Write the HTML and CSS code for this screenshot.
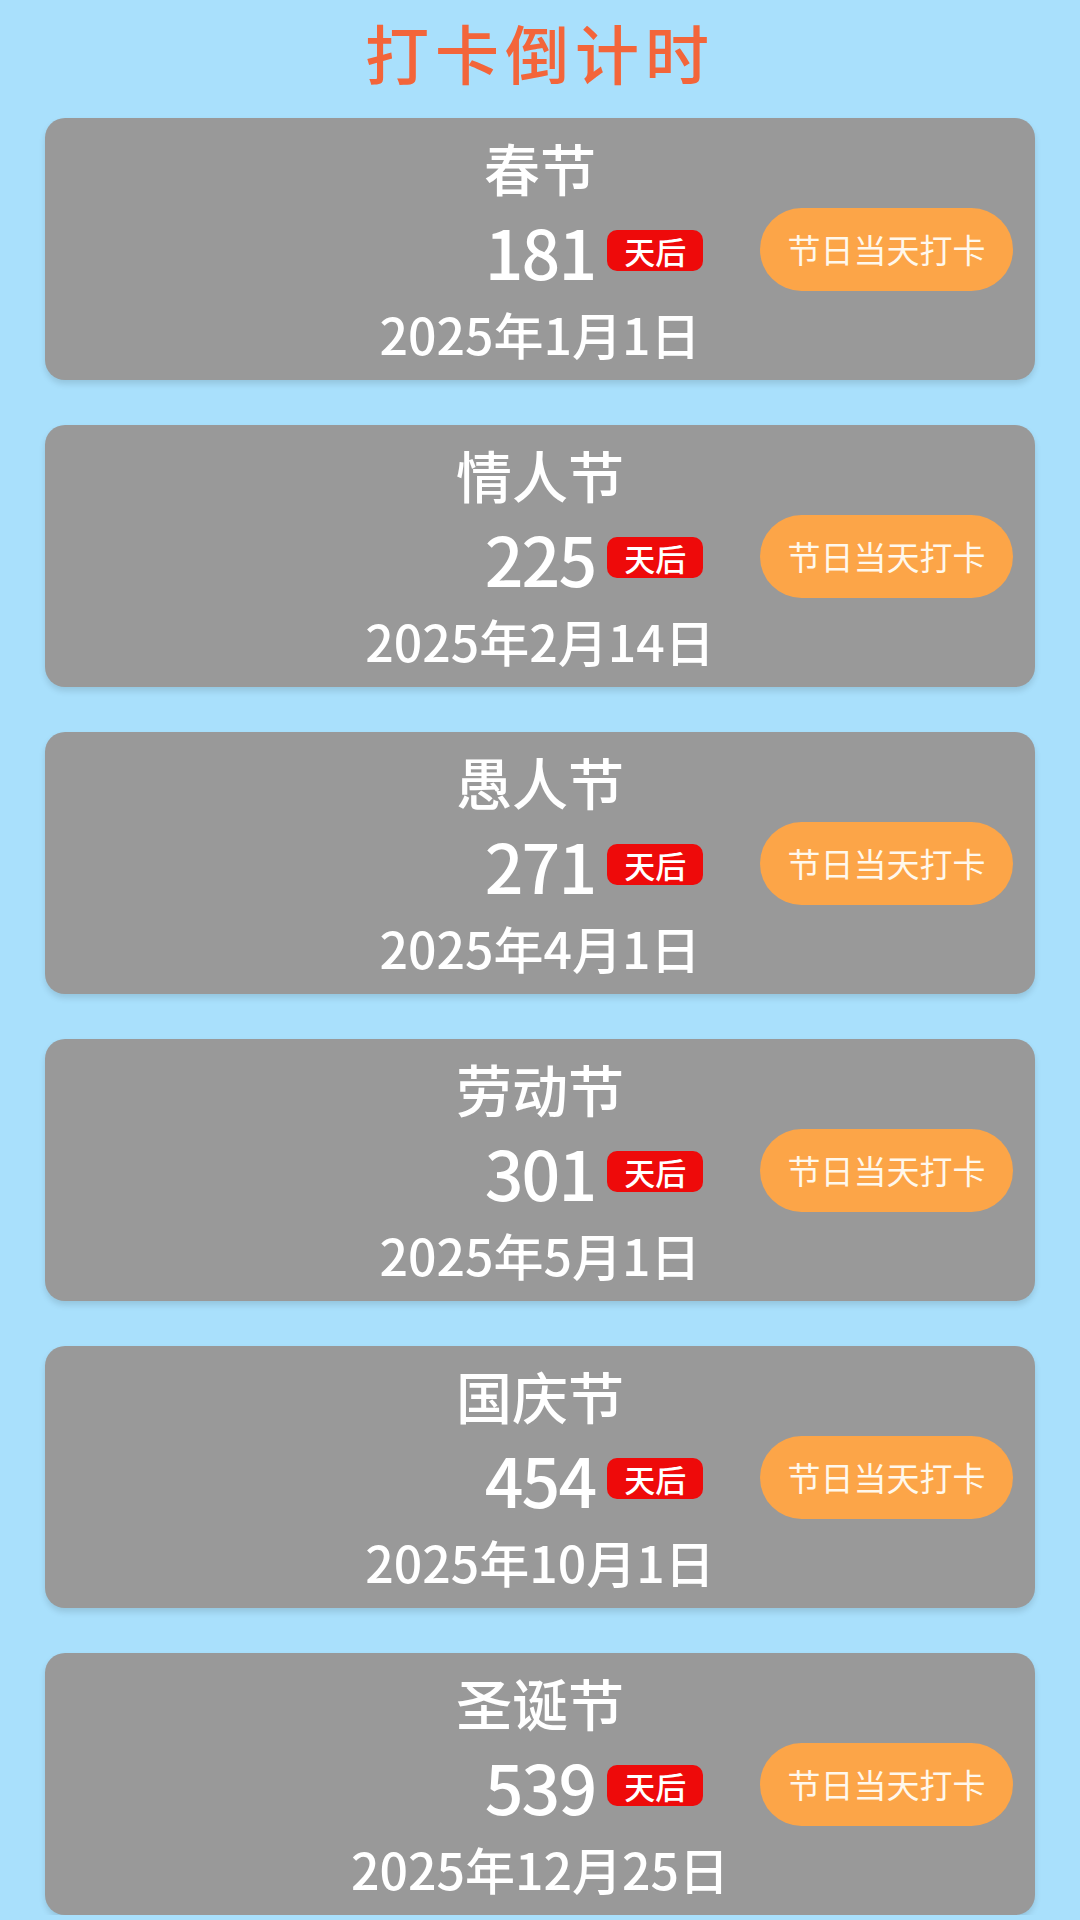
FILE: index.html
```html
<!DOCTYPE html>
<html lang="zh-CN">
<head>
    <meta charset="UTF-8">
    <meta name="viewport" content="width=device-width, initial-scale=1.0">
    <title>打卡倒计时</title>
    <link rel="stylesheet" href="styles.css">
</head>
<body>

<h1 class="page-title">打卡倒计时</h1>

<div class="list">
    <div class="card">
        <div class="info">
            <div class="name">春节</div>
            <div class="count-row">
                <span class="count">181</span>
                <span class="badge">天后</span>
            </div>
            <div class="date">2025年1月1日</div>
        </div>
        <button class="punch" type="button">节日当天打卡</button>
    </div>

    <div class="card">
        <div class="info">
            <div class="name">情人节</div>
            <div class="count-row">
                <span class="count">225</span>
                <span class="badge">天后</span>
            </div>
            <div class="date">2025年2月14日</div>
        </div>
        <button class="punch" type="button">节日当天打卡</button>
    </div>

    <div class="card">
        <div class="info">
            <div class="name">愚人节</div>
            <div class="count-row">
                <span class="count">271</span>
                <span class="badge">天后</span>
            </div>
            <div class="date">2025年4月1日</div>
        </div>
        <button class="punch" type="button">节日当天打卡</button>
    </div>

    <div class="card">
        <div class="info">
            <div class="name">劳动节</div>
            <div class="count-row">
                <span class="count">301</span>
                <span class="badge">天后</span>
            </div>
            <div class="date">2025年5月1日</div>
        </div>
        <button class="punch" type="button">节日当天打卡</button>
    </div>

    <div class="card">
        <div class="info">
            <div class="name">国庆节</div>
            <div class="count-row">
                <span class="count">454</span>
                <span class="badge">天后</span>
            </div>
            <div class="date">2025年10月1日</div>
        </div>
        <button class="punch" type="button">节日当天打卡</button>
    </div>

    <div class="card">
        <div class="info">
            <div class="name">圣诞节</div>
            <div class="count-row">
                <span class="count">539</span>
                <span class="badge">天后</span>
            </div>
            <div class="date">2025年12月25日</div>
        </div>
        <button class="punch" type="button">节日当天打卡</button>
    </div>
</div>

</body>
</html>
```

FILE: styles.css
```css
body {
    margin: 0;
    background: #a9e0fc;
    font-family: "Noto Sans CJK SC", "Noto Sans", sans-serif;
    color: #fff;
    overflow: hidden;
}

.page-title {
    margin: 0 0 27px;
    padding-top: 11px;
    text-align: center;
    font-size: 64px;
    line-height: 80px;
    font-weight: 500;
    letter-spacing: 6px;
    color: #f3653a;
}

.list {
    display: flex;
    flex-direction: column;
    gap: 45px;
    padding: 0 45px;
}

.card {
    display: grid;
    grid-template-columns: 1fr 420px 1fr;
    height: 262px;
    background: #999999;
    border-radius: 20px;
    box-shadow: 0 4px 6px rgba(0, 0, 0, 0.12);
}

.info {
    grid-column: 2;
    align-self: start;
    display: flex;
    flex-direction: column;
    align-items: center;
    padding-top: 13px;
}

.name {
    font-size: 56px;
    line-height: 72px;
    font-weight: 500;
}

.count-row {
    display: grid;
    grid-template-columns: minmax(0, 1fr) auto minmax(0, 1fr);
    width: 100%;
}

.count {
    grid-column: 2;
    font-size: 68px;
    line-height: 96px;
    font-weight: 500;
    letter-spacing: -2px;
}

.badge {
    grid-column: 3;
    justify-self: start;
    align-self: start;
    margin: 27px 0 0 12px;
    padding: 0 17px;
    height: 41px;
    line-height: 41px;
    font-size: 31px;
    font-weight: 500;
    background: #ee0a0a;
    border-radius: 10px;
}

.date {
    margin-top: -2px;
    font-size: 50px;
    line-height: 72px;
    font-weight: 500;
}

.punch {
    grid-column: 3;
    align-self: center;
    justify-self: end;
    margin-right: 22px;
    width: 253px;
    height: 83px;
    padding: 0;
    border: none;
    border-radius: 42px;
    background: #fca548;
    color: #fff8ec;
    font-family: inherit;
    font-size: 33px;
    cursor: pointer;
}
```
